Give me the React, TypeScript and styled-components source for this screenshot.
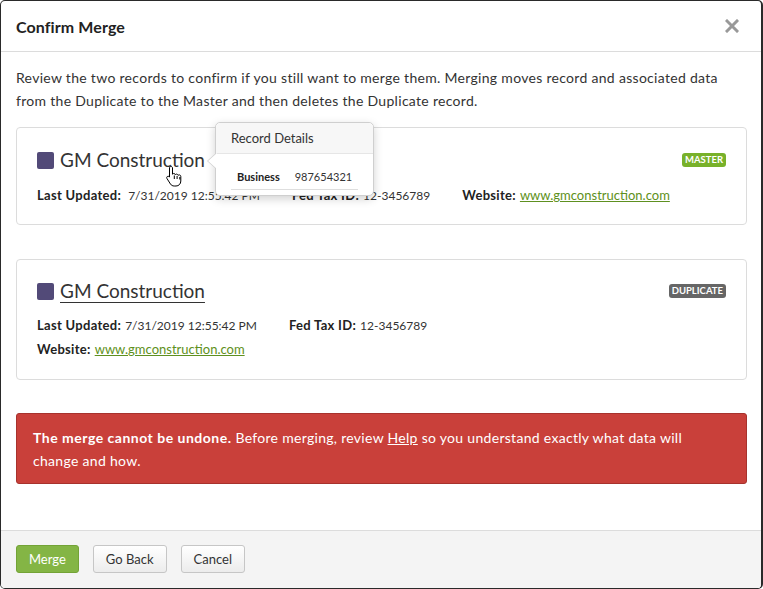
import React from 'react';
import styled, { createGlobalStyle } from 'styled-components';

const Global = createGlobalStyle`
  html, body { margin: 0; padding: 0; background: #fff; }
  body { font-family: Lato, "Open Sans", "Liberation Sans", sans-serif; color: #333; }
  * { box-sizing: border-box; }
`;

const Dialog = styled.div`
  width: 763px;
  height: 589px;
  border: 1px solid #2a2a2a;
  border-right-width: 2px;
  border-radius: 5px;
  display: flex;
  flex-direction: column;
  overflow: hidden;
  background: #fff;
`;

const Header = styled.header`
  height: 51px;
  flex: none;
  display: flex;
  align-items: center;
  justify-content: space-between;
  padding: 0 21px 0 15px;
  border-bottom: 1px solid #dcdcdc;
`;

const Title = styled.h1`
  margin: 0;
  font-size: 16px;
  font-weight: 700;
  color: #222;
  letter-spacing: 0.1px;
`;

const CloseButton = styled.button`
  border: 0;
  background: none;
  padding: 0;
  width: 16px;
  height: 16px;
  display: flex;
  align-items: center;
  justify-content: center;
  cursor: pointer;
`;

const Body = styled.main`
  flex: 1;
  padding: 14px 14px 0 15px;
  display: flex;
  flex-direction: column;
`;

const Intro = styled.p`
  margin: 0 0 15px;
  font-size: 14px;
  line-height: 23px;
  letter-spacing: 0.3px;
  color: #333;
`;

const Card = styled.section<{ $mb: number; $pt: number; $pb: number }>`
  position: relative;
  border: 1px solid #dcdcdc;
  border-radius: 4px;
  padding: ${p => p.$pt}px 20px ${p => p.$pb}px;
  margin-bottom: ${p => p.$mb}px;
`;

const TitleRow = styled.div`
  display: flex;
  align-items: center;
  justify-content: space-between;
  height: 24px;
`;

const NameWrap = styled.div`
  display: flex;
  align-items: center;
  gap: 6px;
`;

const Swatch = styled.span`
  width: 17px;
  height: 17px;
  border-radius: 2px;
  background: #524a78;
  display: inline-block;
`;

const Name = styled.span<{ $underline?: boolean }>`
  font-size: 19px;
  color: #333;
  line-height: 24px;
  text-decoration: ${p => (p.$underline ? 'underline' : 'none')};
  text-underline-offset: 4px;
  text-decoration-thickness: 1px;
`;

const Badge = styled.span<{ $tone: 'master' | 'duplicate' }>`
  font-size: 9.5px;
  font-weight: 700;
  color: #fff;
  background: ${p => (p.$tone === 'master' ? '#78b12a' : '#666')};
  border-radius: 3px;
  padding: 0 3px;
  height: 14px;
  line-height: 14px;
`;

const FieldRow = styled.div<{ $mt: number }>`
  display: flex;
  gap: 32px;
  margin-top: ${p => p.$mt}px;
  height: 20px;
`;

const Field = styled.span`
  display: flex;
  align-items: baseline;
  height: 20px;
  line-height: 20px;
  font-size: 12px;
  color: #333;
  white-space: nowrap;
`;

const Label = styled.b<{ $gap?: number }>`
  font-weight: 700;
  font-size: 13px;
  letter-spacing: 0.3px;
  color: #222;
  margin-right: ${p => p.$gap ?? 4}px;
`;

const Link = styled.a`
  color: #5e9020;
  text-decoration: underline;
  font-size: 13px;
`;

const Popover = styled.div`
  position: absolute;
  left: 198px;
  top: -6px;
  width: 159px;
  background: #fff;
  border: 1px solid #cfcfcf;
  border-radius: 5px;
  box-shadow: 0 3px 10px rgba(0, 0, 0, 0.18);
  z-index: 2;
  &::before,
  &::after {
    content: '';
    position: absolute;
    top: 30px;
    width: 0;
    height: 0;
    border-style: solid;
  }
  &::before {
    left: -9px;
    border-width: 8px 9px 8px 0;
    border-color: transparent #cfcfcf transparent transparent;
  }
  &::after {
    left: -8px;
    border-width: 8px 9px 8px 0;
    border-color: transparent #fff transparent transparent;
  }
`;

const PopHeader = styled.div`
  height: 31px;
  background: #f7f7f7;
  border-bottom: 1px solid #e6e6e6;
  border-radius: 5px 5px 0 0;
  padding: 0 15px;
  display: flex;
  align-items: center;
  font-size: 13px;
  color: #333;
`;

const PopBody = styled.div`
  padding: 12px 15px 5px;
`;

const PopRow = styled.div`
  display: flex;
  gap: 15px;
  padding: 3px 6px 4px;
  border-bottom: 1px solid #dedede;
  font-size: 11px;
  line-height: 16px;
`;

const PopKey = styled.b`
  font-weight: 700;
  color: #222;
`;

const Cursor = styled.svg`
  position: absolute;
  left: 148px;
  top: 37px;
  z-index: 1;
`;

const Alert = styled.div`
  background: #c9403a;
  border: 1px solid #a7322d;
  border-radius: 3px;
  padding: 12px 16px 11px;
  color: #fff;
  font-size: 14px;
  line-height: 23px;
  letter-spacing: 0.3px;
  b { letter-spacing: 0.5px; }
  a { color: #fff; text-decoration: underline; }
`;

const Footer = styled.footer`
  flex: none;
  height: 58px;
  background: #f4f4f4;
  border-top: 1px solid #dcdcdc;
  display: flex;
  align-items: flex-start;
  gap: 14px;
  padding: 14px 15px 0;
`;

const Button = styled.button<{ $primary?: boolean }>`
  height: 28px;
  padding: 0 12px;
  border-radius: 3px;
  font-family: inherit;
  font-size: 13px;
  cursor: pointer;
  color: ${p => (p.$primary ? '#fff' : '#333')};
  border: 1px solid ${p => (p.$primary ? '#73a336' : '#c6c6c6')};
  background: ${p =>
    p.$primary ? '#84b545' : 'linear-gradient(#ffffff, #ececec)'};
`;

export default function App() {
  return (
    <>
      <Global />
      <Dialog>
        <Header>
          <Title>Confirm Merge</Title>
          <CloseButton aria-label="Close">
            <svg width="14" height="14" viewBox="0 0 14 14">
              <path d="M2 2L12 12M12 2L2 12" stroke="#999" strokeWidth="3" strokeLinecap="square" />
            </svg>
          </CloseButton>
        </Header>
        <Body>
          <Intro>
            Review the two records to confirm if you still want to merge them. Merging moves record and associated data
            from the Duplicate to the Master and then deletes the Duplicate record.
          </Intro>
          <Card $mb={34} $pt={20} $pb={19}>
            <TitleRow>
              <NameWrap>
                <Swatch />
                <Name>GM Construction</Name>
              </NameWrap>
              <Badge $tone="master">MASTER</Badge>
            </TitleRow>
            <FieldRow $mt={13}>
              <Field>
                <Label $gap={7}>Last Updated:</Label>7/31/2019 12:55:42 PM
              </Field>
              <Field>
                <Label>Fed Tax ID:</Label>12-3456789
              </Field>
              <Field>
                <Label>Website:</Label>
                <Link href="#">www.gmconstruction.com</Link>
              </Field>
            </FieldRow>
            <Popover>
              <PopHeader>Record Details</PopHeader>
              <PopBody>
                <PopRow>
                  <PopKey>Business</PopKey>
                  <span>987654321</span>
                </PopRow>
              </PopBody>
            </Popover>
            <Cursor width="18" height="22" viewBox="0 0 18 22">
              <path
                d="M6 1.5c.9 0 1.5.6 1.5 1.5v6.2c.3-.5.8-.7 1.3-.7.8 0 1.4.5 1.5 1.2.3-.4.8-.6 1.3-.6.8 0 1.4.6 1.5 1.3.3-.3.7-.5 1.2-.5.9 0 1.5.7 1.5 1.5v4.6c0 2.9-2 5-4.8 5H9.2c-1.6 0-2.8-.7-3.7-1.9L2 13.6c-.5-.7-.4-1.6.3-2.1.6-.4 1.4-.3 1.9.2l.3.4V3c0-.9.6-1.5 1.5-1.5z"
                fill="#fff"
                stroke="#000"
                strokeWidth="1"
              />
              <path d="M9.3 10.5v3.5M12.1 11v3M14.8 12v2.5" stroke="#000" strokeWidth="1" />
            </Cursor>
          </Card>
          <Card $mb={33} $pt={19} $pb={20}>
            <TitleRow>
              <NameWrap>
                <Swatch />
                <Name $underline>GM Construction</Name>
              </NameWrap>
              <Badge $tone="duplicate">DUPLICATE</Badge>
            </TitleRow>
            <FieldRow $mt={12}>
              <Field>
                <Label>Last Updated:</Label>7/31/2019 12:55:42 PM
              </Field>
              <Field>
                <Label>Fed Tax ID:</Label>12-3456789
              </Field>
            </FieldRow>
            <FieldRow $mt={4}>
              <Field>
                <Label>Website:</Label>
                <Link href="#">www.gmconstruction.com</Link>
              </Field>
            </FieldRow>
          </Card>
          <Alert>
            <b>The merge cannot be undone.</b> Before merging, review <a href="#">Help</a> so you understand exactly what
            data will change and how.
          </Alert>
        </Body>
        <Footer>
          <Button $primary>Merge</Button>
          <Button>Go Back</Button>
          <Button>Cancel</Button>
        </Footer>
      </Dialog>
    </>
  );
}
